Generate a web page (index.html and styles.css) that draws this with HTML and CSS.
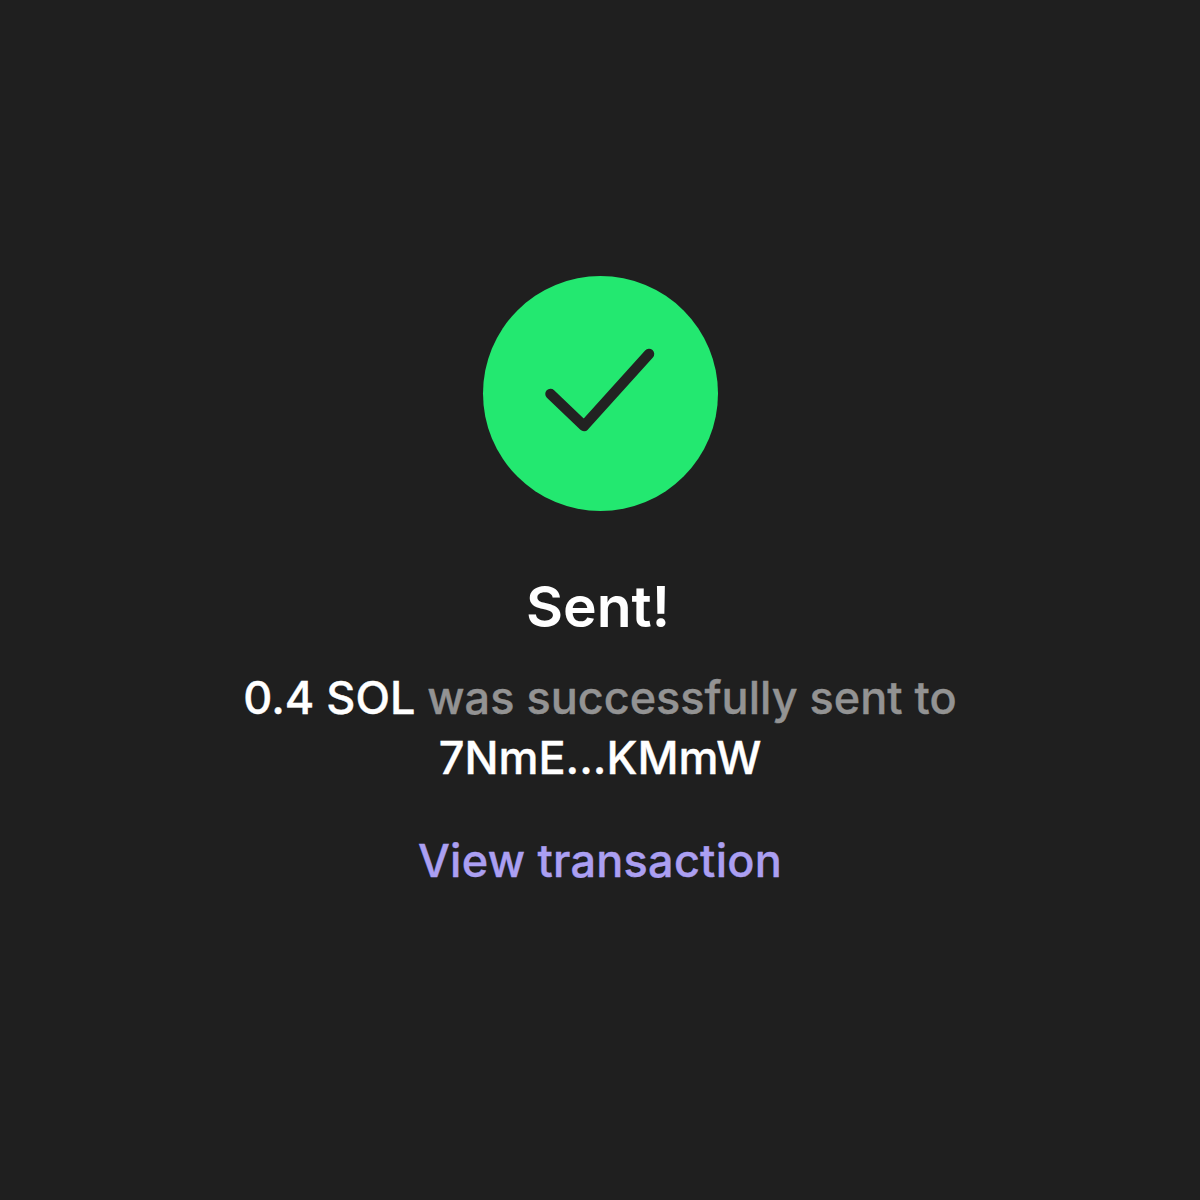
FILE: index.html
```html
<!DOCTYPE html>
<html lang="en">
<head>
<meta charset="utf-8">
<title>Sent</title>
<link rel="stylesheet" href="styles.css">
</head>
<body>
<main class="screen">
  <div class="badge">
    <svg class="check" viewBox="0 0 235 235" width="235" height="235" aria-hidden="true">
      <path d="M67.5 118 L101 150 L166 78" fill="none" stroke="#222222" stroke-width="10.5" stroke-linecap="round" stroke-linejoin="round"/>
    </svg>
  </div>
  <h1 class="title">Sent!</h1>
  <p class="message"><span class="strong">0.4 SOL</span> was successfully sent to<br><span class="strong">7NmE...KMmW</span></p>
  <a class="link">View transaction</a>
</main>
</body>
</html>
```

FILE: styles.css
```css
html, body {
  margin: 0;
  padding: 0;
  background: #1f1f1f;
}
.screen {
  box-sizing: border-box;
  width: 1200px;
  height: 1200px;
  padding-top: 276px;
  display: flex;
  flex-direction: column;
  align-items: center;
  font-family: Inter, "Liberation Sans", sans-serif;
}
.badge {
  width: 235px;
  height: 235px;
  border-radius: 50%;
  background: #23e870;
}
.check { display: block; }
.title {
  margin: 62px 0 0;
  padding-right: 4px;
  font-size: 57px;
  line-height: 68px;
  font-weight: 600;
  color: #ffffff;
}
.message {
  margin: 27px 0 0;
  font-size: 45px;
  line-height: 60px;
  font-weight: 500;
  color: #939393;
  text-align: center;
  -webkit-text-stroke: 0.4px #939393;
}
.strong {
  color: #ffffff;
  -webkit-text-stroke: 0.4px #ffffff;
}
.link {
  margin-top: 43px;
  font-size: 45px;
  line-height: 60px;
  font-weight: 500;
  letter-spacing: 0.25px;
  color: #ab9ff2;
  -webkit-text-stroke: 0.4px #ab9ff2;
}
```
